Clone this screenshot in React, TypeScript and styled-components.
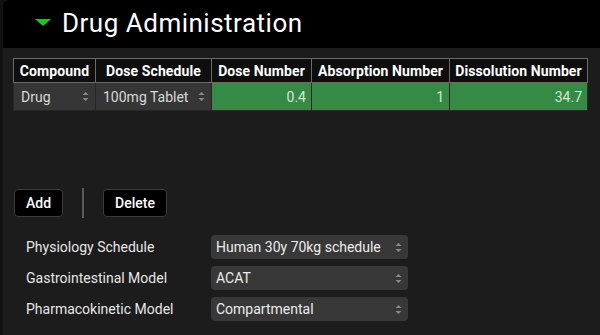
import styled, { createGlobalStyle } from "styled-components";

const GlobalStyle = createGlobalStyle`
  html, body {
    margin: 0;
    padding: 0;
    background: #111111;
  }
  body {
    font-family: Roboto, "Liberation Sans", sans-serif;
  }
`;

const columns = [
  { name: "Compound", width: 82 },
  { name: "Dose Schedule", width: 116 },
  { name: "Dose Number", width: 100 },
  { name: "Absorption Number", width: 138 },
  { name: "Dissolution Number", width: 138 },
];

const settings = [
  { label: "Physiology Schedule", value: "Human 30y 70kg schedule" },
  { label: "Gastrointestinal Model", value: "ACAT" },
  { label: "Pharmacokinetic Model", value: "Compartmental" },
];

const Spinner = () => (
  <svg width="7" height="11" viewBox="0 0 7 11">
    <path d="M3.5 1 L6.5 4 L0.5 4 Z" fill="#8a8a8a" />
    <path d="M3.5 10 L6.5 7 L0.5 7 Z" fill="#8a8a8a" />
  </svg>
);

export default function App() {
  return (
    <>
      <GlobalStyle />
      <Panel>
        <Header>
          <Caret />
          <Title>Drug Administration</Title>
        </Header>
        <Body>
          <Table>
            <colgroup>
              {columns.map((c) => (
                <col key={c.name} style={{ width: c.width }} />
              ))}
            </colgroup>
            <thead>
              <tr>
                {columns.map((c) => (
                  <Th key={c.name}>{c.name}</Th>
                ))}
              </tr>
            </thead>
            <tbody>
              <tr>
                <SelectCell>
                  <CellInner>
                    <span>Drug</span>
                    <Spinner />
                  </CellInner>
                </SelectCell>
                <SelectCell>
                  <CellInner>
                    <span>100mg Tablet</span>
                    <Spinner />
                  </CellInner>
                </SelectCell>
                <ValueCell>0.4</ValueCell>
                <ValueCell>1</ValueCell>
                <ValueCell>34.7</ValueCell>
              </tr>
            </tbody>
          </Table>

          <Toolbar>
            <Button>Add</Button>
            <Divider />
            <Button>Delete</Button>
          </Toolbar>

          <Settings>
            {settings.map((s) => (
              <SettingRow key={s.label}>
                <Label>{s.label}</Label>
                <Select>
                  <span>{s.value}</span>
                  <Spinner />
                </Select>
              </SettingRow>
            ))}
          </Settings>
        </Body>
      </Panel>
    </>
  );
}

const Panel = styled.div`
  width: 597px;
  height: 335px;
  margin-left: 3px;
  background: #1c1c1c;
  border-top-left-radius: 6px;
  overflow: hidden;
  display: flex;
  flex-direction: column;
`;

const Header = styled.div`
  height: 48px;
  background: #000000;
  display: flex;
  align-items: center;
  padding-left: 32px;
  gap: 11px;
  box-sizing: border-box;
  padding-bottom: 2px;
`;

const Caret = styled.div`
  width: 0;
  height: 0;
  border-left: 8px solid transparent;
  border-right: 8px solid transparent;
  border-top: 7px solid #22c41c;
  margin-top: -2px;
`;

const Title = styled.div`
  color: #ffffff;
  font-size: 26px;
  font-weight: 400;
  letter-spacing: 0.5px;
`;

const Body = styled.div`
  padding: 10px 0 0 10px;
  display: flex;
  flex-direction: column;
`;

const Table = styled.table`
  border-collapse: collapse;
  table-layout: fixed;
  width: 574px;
`;

const Th = styled.th`
  background: #0e0e0e;
  color: #ffffff;
  font-size: 14px;
  font-weight: 700;
  height: 23px;
  padding: 0 2px;
  border: 1px solid #6a6a6a;
  white-space: nowrap;
  text-align: center;
  letter-spacing: 0.1px;
`;

const SelectCell = styled.td`
  background: #363636;
  color: #d8d8d8;
  height: 27px;
  padding: 0 6px 0 7px;
  border: 1px solid #262626;
  font-size: 14px;
`;

const CellInner = styled.div`
  display: flex;
  align-items: center;
  justify-content: space-between;
`;

const ValueCell = styled.td`
  background: #358a45;
  color: #d6e6d6;
  height: 27px;
  padding: 0 5px;
  text-align: right;
  border: 1px solid #2a2a2a;
  font-size: 14px;
`;

const Toolbar = styled.div`
  display: flex;
  align-items: center;
  margin-top: 77px;
  margin-left: 1px;
`;

const Button = styled.button`
  height: 28px;
  padding: 0 11px;
  background: #000000;
  color: #ffffff;
  border: 1px solid #3c3c3c;
  border-radius: 4px;
  font-family: inherit;
  font-size: 14px;
  font-weight: 500;
`;

const Divider = styled.div`
  width: 2px;
  height: 30px;
  background: #5a5a5a;
  margin: 0 19px;
`;

const Settings = styled.div`
  display: flex;
  flex-direction: column;
  gap: 7px;
  margin-top: 17px;
  margin-left: 13px;
`;

const SettingRow = styled.div`
  display: flex;
  align-items: center;
`;

const Label = styled.div`
  width: 185px;
  color: #e6e6e6;
  font-size: 14px;
`;

const Select = styled.div`
  width: 197px;
  height: 24px;
  box-sizing: border-box;
  background: #383838;
  border-radius: 4px;
  color: #ececec;
  font-size: 14px;
  display: flex;
  align-items: center;
  justify-content: space-between;
  padding: 0 6px 0 5px;
`;
